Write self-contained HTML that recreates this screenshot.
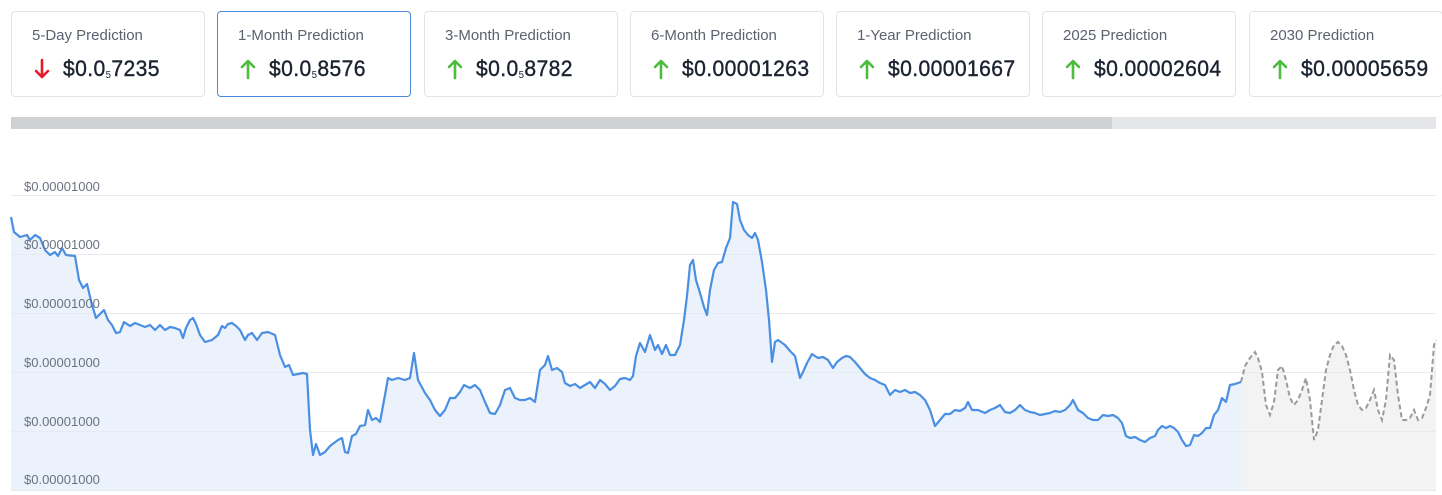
<!DOCTYPE html>
<html><head><meta charset="utf-8"><style>
body{margin:0;width:1442px;height:495px;background:#fff;font-family:"Liberation Sans",sans-serif;overflow:hidden;position:relative}
.card{position:absolute;top:11px;width:194px;height:86px;border:1px solid #e3e4e8;border-radius:4px;box-sizing:border-box}
.card.sel{border-color:#4a8ad6}
.t{position:absolute;left:20px;top:15px;font-size:15px;color:#5b6270}
.v{position:absolute;left:51px;top:44px;font-size:22px;color:#1c2330;white-space:nowrap;-webkit-text-stroke:0.4px #1c2330;letter-spacing:0.4px;transform:scaleX(0.96);transform-origin:left}
.v sub{font-size:10px;vertical-align:-2px;-webkit-text-stroke:0}
.ar{position:absolute;left:22px;top:46px}
.lbl{position:absolute;left:24px;font-size:13px;color:#6b7280}
</style></head><body>
<svg width="0" height="0" style="position:absolute"><defs>
<g id="up"><path d="M8 20V3M2 9L8 3L14 9" fill="none" stroke="#4cbc3c" stroke-width="2.6" stroke-linecap="round" stroke-linejoin="round"/></g>
<g id="dn"><path d="M8 2V19M2 13L8 19L14 13" fill="none" stroke="#e8192c" stroke-width="2.6" stroke-linecap="round" stroke-linejoin="round"/></g>
</defs></svg>
<div class="card" style="left:11px"><div class="t">5-Day Prediction</div><svg class="ar" width="16" height="22"><use href="#dn"/></svg><div class="v">$0.0<sub>5</sub>7235</div></div>
<div class="card sel" style="left:217px"><div class="t">1-Month Prediction</div><svg class="ar" width="16" height="22"><use href="#up"/></svg><div class="v">$0.0<sub>5</sub>8576</div></div>
<div class="card" style="left:424px"><div class="t">3-Month Prediction</div><svg class="ar" width="16" height="22"><use href="#up"/></svg><div class="v">$0.0<sub>5</sub>8782</div></div>
<div class="card" style="left:630px"><div class="t">6-Month Prediction</div><svg class="ar" width="16" height="22"><use href="#up"/></svg><div class="v">$0.00001263</div></div>
<div class="card" style="left:836px"><div class="t">1-Year Prediction</div><svg class="ar" width="16" height="22"><use href="#up"/></svg><div class="v">$0.00001667</div></div>
<div class="card" style="left:1042px"><div class="t">2025 Prediction</div><svg class="ar" width="16" height="22"><use href="#up"/></svg><div class="v">$0.00002604</div></div>
<div class="card" style="left:1249px"><div class="t">2030 Prediction</div><svg class="ar" width="16" height="22"><use href="#up"/></svg><div class="v">$0.00005659</div></div>
<div style="position:absolute;left:11px;top:117px;width:1425px;height:12px;background:#e5e6ea"></div>
<div style="position:absolute;left:11px;top:117px;width:1101px;height:12px;background:#d0d1d5"></div>
<svg style="position:absolute;left:0;top:0" width="1442" height="495">
<path fill="#f3f3f3" d="M1241,491 L1241,382 1245,366 1250,358 1255,352 1258,358 1262,372 1266,405 1270,415 1274,402 1278,370 1282,366 1286,380 1290,398 1294,405 1298,400 1302,390 1306,378 1310,400 1314,440 1318,430 1322,400 1326,370 1330,355 1334,345 1338,342 1342,346 1346,355 1350,370 1354,390 1358,405 1362,410 1366,408 1370,400 1374,390 1378,410 1382,420 1386,400 1390,355 1394,360 1398,395 1402,420 1406,420 1410,418 1414,410 1418,420 1422,418 1426,408 1430,395 1434,345 1436,340 L1436,491 Z"/>
<path fill="#ebf2fc" d="M11,491 L11,217 14,232 20,237 27,235 30,240 35,235 40,238 45,250 50,255 55,252 58,256 62,248 66,255 75,256 79,280 83,288 87,284 92,305 96,318 100,314 104,310 108,320 112,325 116,333 120,332 124,322 130,326 135,323 140,325 145,327 150,325 155,330 160,325 165,330 170,327 175,328 180,330 183,338 186,328 190,320 193,318 196,324 200,335 205,342 212,340 218,335 222,326 225,328 228,324 232,323 236,326 240,330 245,340 248,335 252,333 257,340 262,333 268,332 275,335 280,355 285,367 289,365 293,375 298,374 303,373 307,374 310,430 313,455 316,444 320,455 325,452 330,446 338,440 342,438 345,452 348,453 352,436 356,434 360,426 365,425 368,410 372,420 376,418 380,422 385,395 388,378 392,380 398,378 405,380 410,378 414,353 418,380 425,393 430,400 435,410 440,416 445,410 450,398 455,398 460,392 464,385 470,388 475,385 480,390 485,402 490,413 495,414 500,405 505,390 510,388 515,398 520,400 525,400 530,398 535,402 540,370 545,365 548,356 552,370 557,368 562,372 565,383 570,386 575,384 580,388 585,385 590,382 595,388 600,380 605,384 610,390 615,386 620,379 625,378 630,380 633,376 636,356 640,343 645,352 650,335 655,350 658,345 662,354 666,345 670,355 675,355 680,345 684,320 687,296 690,265 693,260 696,280 700,293 704,307 707,315 710,290 714,270 718,263 722,262 726,248 730,238 733,202 737,204 740,220 744,230 748,235 752,238 755,233 758,240 762,262 766,290 769,320 772,362 775,342 778,340 785,345 790,351 795,356 800,378 803,372 807,363 812,354 818,358 823,357 828,360 833,368 837,362 842,358 846,356 850,357 855,362 860,368 865,374 870,378 875,380 880,383 885,385 890,395 895,390 900,392 905,390 910,393 915,392 920,395 925,400 930,410 935,426 940,420 945,414 950,414 955,410 960,411 965,408 968,402 972,410 978,410 985,413 990,410 995,408 1000,405 1005,412 1010,413 1015,410 1020,405 1025,410 1030,412 1035,413 1040,415 1045,414 1050,413 1055,411 1060,412 1065,410 1070,405 1073,400 1078,410 1083,413 1088,418 1093,420 1098,420 1103,415 1108,416 1113,415 1118,418 1122,423 1126,436 1130,438 1135,437 1140,440 1145,442 1150,438 1155,436 1158,430 1162,426 1166,428 1170,426 1174,428 1178,432 1182,440 1186,446 1190,445 1194,435 1198,436 1202,433 1206,428 1210,428 1214,415 1218,410 1222,398 1226,402 1230,385 1235,384 1241,382 L1241,491 Z"/>
<g stroke="#e6ebf2" stroke-width="1"><line x1="11" x2="1436" y1="195.5" y2="195.5"/><line x1="11" x2="1436" y1="254.5" y2="254.5"/><line x1="11" x2="1436" y1="313.5" y2="313.5"/><line x1="11" x2="1436" y1="372.5" y2="372.5"/><line x1="11" x2="1436" y1="431.5" y2="431.5"/><line x1="11" x2="1436" y1="490.5" y2="490.5"/></g>
<polyline fill="none" stroke="#4a8fe2" stroke-width="2.2" stroke-linejoin="round" points="11,217 14,232 20,237 27,235 30,240 35,235 40,238 45,250 50,255 55,252 58,256 62,248 66,255 75,256 79,280 83,288 87,284 92,305 96,318 100,314 104,310 108,320 112,325 116,333 120,332 124,322 130,326 135,323 140,325 145,327 150,325 155,330 160,325 165,330 170,327 175,328 180,330 183,338 186,328 190,320 193,318 196,324 200,335 205,342 212,340 218,335 222,326 225,328 228,324 232,323 236,326 240,330 245,340 248,335 252,333 257,340 262,333 268,332 275,335 280,355 285,367 289,365 293,375 298,374 303,373 307,374 310,430 313,455 316,444 320,455 325,452 330,446 338,440 342,438 345,452 348,453 352,436 356,434 360,426 365,425 368,410 372,420 376,418 380,422 385,395 388,378 392,380 398,378 405,380 410,378 414,353 418,380 425,393 430,400 435,410 440,416 445,410 450,398 455,398 460,392 464,385 470,388 475,385 480,390 485,402 490,413 495,414 500,405 505,390 510,388 515,398 520,400 525,400 530,398 535,402 540,370 545,365 548,356 552,370 557,368 562,372 565,383 570,386 575,384 580,388 585,385 590,382 595,388 600,380 605,384 610,390 615,386 620,379 625,378 630,380 633,376 636,356 640,343 645,352 650,335 655,350 658,345 662,354 666,345 670,355 675,355 680,345 684,320 687,296 690,265 693,260 696,280 700,293 704,307 707,315 710,290 714,270 718,263 722,262 726,248 730,238 733,202 737,204 740,220 744,230 748,235 752,238 755,233 758,240 762,262 766,290 769,320 772,362 775,342 778,340 785,345 790,351 795,356 800,378 803,372 807,363 812,354 818,358 823,357 828,360 833,368 837,362 842,358 846,356 850,357 855,362 860,368 865,374 870,378 875,380 880,383 885,385 890,395 895,390 900,392 905,390 910,393 915,392 920,395 925,400 930,410 935,426 940,420 945,414 950,414 955,410 960,411 965,408 968,402 972,410 978,410 985,413 990,410 995,408 1000,405 1005,412 1010,413 1015,410 1020,405 1025,410 1030,412 1035,413 1040,415 1045,414 1050,413 1055,411 1060,412 1065,410 1070,405 1073,400 1078,410 1083,413 1088,418 1093,420 1098,420 1103,415 1108,416 1113,415 1118,418 1122,423 1126,436 1130,438 1135,437 1140,440 1145,442 1150,438 1155,436 1158,430 1162,426 1166,428 1170,426 1174,428 1178,432 1182,440 1186,446 1190,445 1194,435 1198,436 1202,433 1206,428 1210,428 1214,415 1218,410 1222,398 1226,402 1230,385 1235,384 1241,382"/>
<polyline fill="none" stroke="#9a9a9a" stroke-width="2" stroke-dasharray="5,3" points="1241,382 1245,366 1250,358 1255,352 1258,358 1262,372 1266,405 1270,415 1274,402 1278,370 1282,366 1286,380 1290,398 1294,405 1298,400 1302,390 1306,378 1310,400 1314,440 1318,430 1322,400 1326,370 1330,355 1334,345 1338,342 1342,346 1346,355 1350,370 1354,390 1358,405 1362,410 1366,408 1370,400 1374,390 1378,410 1382,420 1386,400 1390,355 1394,360 1398,395 1402,420 1406,420 1410,418 1414,410 1418,420 1422,418 1426,408 1430,395 1434,345 1436,340"/>
</svg>
<div class="lbl" style="top:179px">$0.00001000</div>
<div class="lbl" style="top:237px">$0.00001000</div>
<div class="lbl" style="top:296px">$0.00001000</div>
<div class="lbl" style="top:355px">$0.00001000</div>
<div class="lbl" style="top:414px">$0.00001000</div>
<div class="lbl" style="top:472px">$0.00001000</div>
</body></html>
